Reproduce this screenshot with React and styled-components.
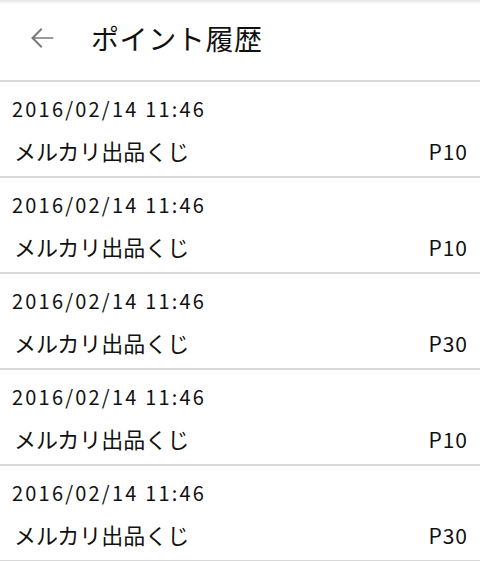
import React from "react";
import styled, { createGlobalStyle } from "styled-components";

const GlobalStyle = createGlobalStyle`
  html, body {
    margin: 0;
    padding: 0;
    background: #ffffff;
  }
  body {
    font-family: "Noto Sans CJK JP", "Noto Sans", sans-serif;
    color: #111;
  }
`;

const Page = styled.div`
  width: 480px;
  height: 561px;
  overflow: hidden;
  background: #fff;
`;

const Header = styled.header`
  height: 80px;
  display: flex;
  align-items: center;
  border-bottom: 2px solid #d8d8d8;
  background: linear-gradient(to bottom, #e4e4e4 0px, #fff 4px);
`;

const BackButton = styled.button`
  width: 84px;
  height: 80px;
  padding: 0;
  border: none;
  background: transparent;
  display: flex;
  align-items: center;
  justify-content: center;
  margin-top: -4px;
`;

const Title = styled.h1`
  margin: 0;
  font-size: 28px;
  font-weight: 400;
  line-height: 1;
  letter-spacing: 0.6px;
  margin-top: -4px;
  margin-left: 7px;
  color: #111;
`;

const List = styled.ul`
  list-style: none;
  margin: 0;
  padding: 0;
`;

const Row = styled.li`
  height: 96px;
  padding: 12px 13px 0 12px;
  box-sizing: border-box;
  border-bottom: 2px solid #d8d8d8;
  display: flex;
  flex-direction: column;
  gap: 9px;
`;

const DateText = styled.div`
  font-size: 20px;
  line-height: 30px;
  letter-spacing: 2.2px;
`;

const Line = styled.div`
  display: flex;
  justify-content: space-between;
  align-items: baseline;
  font-size: 22px;
  line-height: 34px;
`;

const Name = styled.span`
  padding-left: 2px;
`;

const Points = styled.span`
  font-size: 21px;
  letter-spacing: 1px;
  margin-right: -1px;
`;

const items = [
  { date: "2016/02/14 11:46", name: "メルカリ出品くじ", points: "P10" },
  { date: "2016/02/14 11:46", name: "メルカリ出品くじ", points: "P10" },
  { date: "2016/02/14 11:46", name: "メルカリ出品くじ", points: "P30" },
  { date: "2016/02/14 11:46", name: "メルカリ出品くじ", points: "P10" },
  { date: "2016/02/14 11:46", name: "メルカリ出品くじ", points: "P30" },
];

export default function App() {
  return (
    <Page>
      <GlobalStyle />
      <Header>
        <BackButton aria-label="back">
          <svg width="34" height="34" viewBox="0 0 24 24">
            <path
              d="M20 11.4H6.9l5.4-5.4-1-1L4.3 12l7 7 1-1-5.4-5.4H20v-1.2z"
              fill="#7a7a7a"
            />
          </svg>
        </BackButton>
        <Title>ポイント履歴</Title>
      </Header>
      <List>
        {items.map((item, i) => (
          <Row key={i}>
            <DateText>{item.date}</DateText>
            <Line>
              <Name>{item.name}</Name>
              <Points>{item.points}</Points>
            </Line>
          </Row>
        ))}
      </List>
    </Page>
  );
}
